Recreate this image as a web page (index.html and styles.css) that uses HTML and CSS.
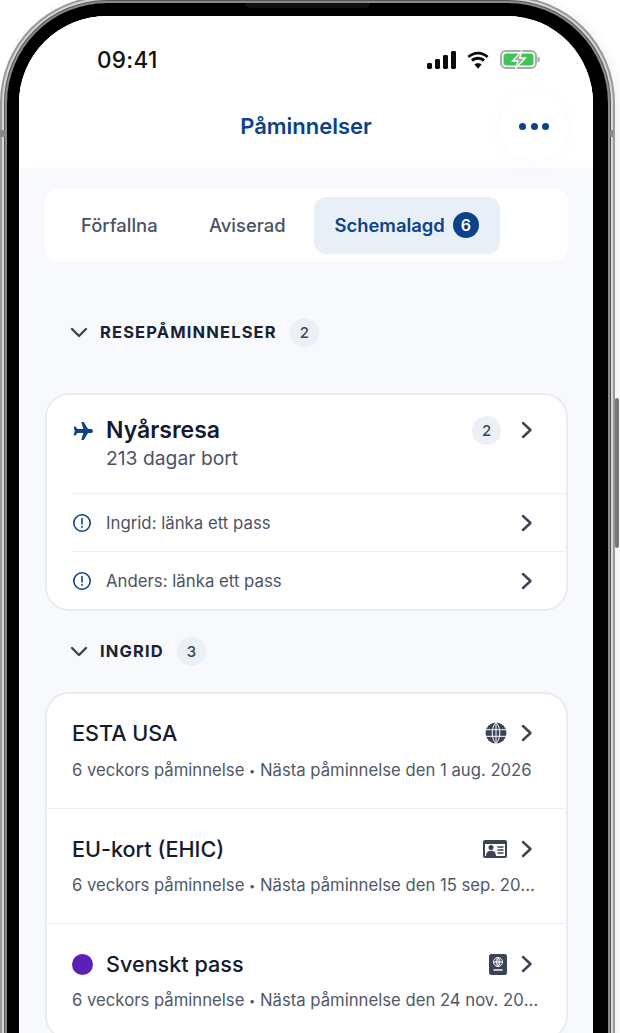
FILE: index.html
```html
<!DOCTYPE html>
<html lang="sv">

<head>
    <meta charset="UTF-8">
    <meta name="viewport" content="width=device-width, initial-scale=1.0">
    <title>Påminnelser</title>
    <link rel="stylesheet" href="styles.css">
</head>

<body>
<div class="phone">
    <span class="speaker"></span>
    <span class="side-button"></span>
    <span class="side-notch-left"></span>
    <span class="side-notch-right"></span>

    <div class="screen">
        <header class="top">
            <div class="status">
                <span class="time">09:41</span>
                <div class="status-icons">
                    <svg width="29" height="18" viewBox="0 0 29 18"><rect x="0" y="12" width="5" height="6" rx="1.4"/><rect x="8" y="8" width="5" height="10" rx="1.4"/><rect x="16" y="4" width="5" height="14" rx="1.4"/><rect x="24" y="0" width="5" height="18" rx="1.4"/></svg>
                    <svg width="24" height="18" viewBox="0 0 25 18"><path d="M12.500 3.400c3.500 0 6.700 1.300 9.100 3.500l1.900-2.100C20.500 2 16.700.3 12.500.3S4.500 2 1.500 4.800l1.900 2.100c2.400-2.200 5.600-3.500 9.100-3.500z"/><path d="M12.500 8.700c2 0 3.900.8 5.300 2l2-2.100c-2-1.800-4.500-2.900-7.300-2.900s-5.300 1.100-7.300 2.900l2 2.100c1.400-1.200 3.300-2 5.300-2z"/><path d="M12.500 18l3.700-4.200c-1-.8-2.300-1.300-3.700-1.300s-2.700.5-3.700 1.300z"/></svg>
                    <svg width="41" height="19" viewBox="0 0 41 19">
                        <rect x="1" y="1" width="35" height="17" rx="5" fill="none" stroke="#a8aca8" stroke-width="2"/>
                        <rect x="3.500" y="3.500" width="30" height="12" rx="3" fill="#3ec455"/>
                        <path d="M37.500 6.500c1.500.4 2.500 1.500 2.500 3s-1 2.600-2.500 3z" fill="#a8aca8"/>
                        <path d="M22 .8 12.500 11h5.500l-2.500 7.500 10-10.500h-5.800z" fill="#a8aca8" stroke="#fff" stroke-width="1.300"/>
                    </svg>
                </div>
            </div>
            <div class="title-bar">
                <h1 class="title">Påminnelser</h1>
                <button class="more-button" type="button"><span></span><span></span><span></span></button>
            </div>
        </header>

        <main class="content">
            <nav class="tabs">
                <a class="tab">Förfallna</a>
                <a class="tab">Aviserad</a>
                <a class="tab active">Schemalagd <span class="tab-count">6</span></a>
            </nav>

            <div class="section-head first">
                <svg class="caret" width="18" height="11" viewBox="0 0 18 11"><path d="M2 2l7 7 7-7"/></svg>
                <h2>RESEPÅMINNELSER</h2>
                <span class="count">2</span>
            </div>

            <section class="card">
                <div class="trip-row">
                    <svg class="plane" width="21" height="18" viewBox="0 0 21 18"><path d="M9.300 0h2.400l4.300 6.900h3c1 0 1.900.9 1.900 2.100s-.9 2.100-1.900 2.100h-3L11.700 18H9.300l2-6.900H5.400l-1.900 2.500H1.600L2.800 9 1.600 4.400h1.900l1.900 2.500h5.900z"/></svg>
                    <div class="trip-text">
                        <div class="trip-name">Nyårsresa</div>
                        <div class="trip-sub">213 dagar bort</div>
                    </div>
                    <span class="count">2</span>
                    <svg class="chevron" width="12" height="18" viewBox="0 0 12 18"><path d="M2 2l7.500 7L2 16"/></svg>
                </div>
                <div class="todo-row">
                    <svg class="alert" width="20" height="20" viewBox="0 0 20 20"><circle cx="10" cy="10" r="8.200"/><path d="M10 5.500v5.500M10 13.600v.6"/></svg>
                    <span class="todo-text">Ingrid: länka ett pass</span>
                    <svg class="chevron" width="12" height="18" viewBox="0 0 12 18"><path d="M2 2l7.500 7L2 16"/></svg>
                </div>
                <div class="todo-row">
                    <svg class="alert" width="20" height="20" viewBox="0 0 20 20"><circle cx="10" cy="10" r="8.200"/><path d="M10 5.500v5.500M10 13.600v.6"/></svg>
                    <span class="todo-text">Anders: länka ett pass</span>
                    <svg class="chevron" width="12" height="18" viewBox="0 0 12 18"><path d="M2 2l7.500 7L2 16"/></svg>
                </div>
            </section>

            <div class="section-head">
                <svg class="caret" width="18" height="11" viewBox="0 0 18 11"><path d="M2 2l7 7 7-7"/></svg>
                <h2>INGRID</h2>
                <span class="count">3</span>
            </div>

            <section class="card">
                <div class="doc-row">
                    <div class="doc-top">
                        <span class="doc-name">ESTA USA</span>
                        <svg class="doc-icon" width="22" height="22" viewBox="0 0 22 22"><circle cx="11" cy="11" r="10.500"/><path d="M.5 7.700h21M.5 14.300h21M11 .5v21M11 .5C6 5 6 17 11 21.500M11 .5c5 4.500 5 16.500 0 21" fill="none" stroke="#fff" stroke-width="1"/></svg>
                        <svg class="chevron" width="12" height="18" viewBox="0 0 12 18"><path d="M2 2l7.500 7L2 16"/></svg>
                    </div>
                    <div class="doc-sub">6 veckors påminnelse <span class="sep">•</span> Nästa påminnelse den 1 aug. 2026</div>
                </div>
                <div class="doc-row">
                    <div class="doc-top">
                        <span class="doc-name">EU-kort (EHIC)</span>
                        <svg class="doc-icon" width="24" height="18" viewBox="0 0 24 18"><rect width="24" height="18" rx="2"/><rect x="2" y="4" width="20" height="12" fill="#fff"/><circle cx="8" cy="7.500" r="2.500"/><path d="M3 16c0-3.500 2.200-5.200 5-5.200s5 1.700 5 5.200z"/><path d="M14.500 7h6M14.500 10h6M14.500 13h6" stroke="#3b4455" stroke-width="1.600"/></svg>
                        <svg class="chevron" width="12" height="18" viewBox="0 0 12 18"><path d="M2 2l7.500 7L2 16"/></svg>
                    </div>
                    <div class="doc-sub">6 veckors påminnelse <span class="sep">•</span> Nästa påminnelse den 15 sep. 2026</div>
                </div>
                <div class="doc-row">
                    <div class="doc-top">
                        <span class="dot"></span>
                        <span class="doc-name">Svenskt pass</span>
                        <svg class="doc-icon" width="18" height="21" viewBox="0 0 18 21"><rect width="18" height="21" rx="2.500"/><g fill="none" stroke="#fff" stroke-width="1"><circle cx="9" cy="8" r="4.500"/><path d="M4.500 8h9M9 3.500v9M9 3.500c-2.500 2.500-2.500 6.500 0 9M9 3.500c2.500 2.500 2.500 6.500 0 9"/></g><path d="M4.500 16h9" stroke="#fff" stroke-width="1.400"/></svg>
                        <svg class="chevron" width="12" height="18" viewBox="0 0 12 18"><path d="M2 2l7.500 7L2 16"/></svg>
                    </div>
                    <div class="doc-sub">6 veckors påminnelse <span class="sep">•</span> Nästa påminnelse den 24 nov. 2026</div>
                </div>
            </section>
        </main>
    </div>
</div>
</body>

</html>
```

FILE: styles.css
```css
html,
body {
    margin: 0;
    height: 1033px;
    overflow: hidden;
    background-color: #fff;
}

body {
    font-family: 'Inter', 'Liberation Sans', sans-serif;
    color: #141b2e;
}

h1,
h2 {
    margin: 0;
}

.phone {
    position: relative;
    box-sizing: border-box;
    width: 601px;
    height: 1200px;
    margin: 3px 0 0 7px;
    border: 12px solid #000;
    border-top-width: 13px;
    border-right-width: 15px;
    border-radius: 100px;
    box-shadow: 0 0 0 2px #8a8a8a, 0 0 0 3px #555, 0 0 0 5px #d8d8d8, 0 0 0 7px #999, 3px 0 12px 7px rgba(0, 0, 0, 0.06);
}

.speaker {
    position: absolute;
    top: -13px;
    left: 226px;
    width: 125px;
    height: 5px;
    background-color: #111;
    border-radius: 0 0 6px 6px;
}

.side-button {
    position: absolute;
    top: 382px;
    right: -26px;
    width: 4px;
    height: 150px;
    background-color: #777;
    border-radius: 2px;
}

.side-notch-left {
    position: absolute;
    top: 114px;
    left: -19px;
    width: 5px;
    height: 7px;
    background-color: #888;
}

.side-notch-right {
    position: absolute;
    top: 114px;
    right: -20px;
    width: 5px;
    height: 7px;
    background-color: #888;
}

.screen {
    height: 100%;
    overflow: hidden;
    background-color: #f7f9fd;
    border-radius: 88px;
}

.top {
    height: 152px;
    background-color: #fff;
}

.status {
    display: flex;
    align-items: center;
    justify-content: space-between;
    padding: 30px 52px 0 78px;
}

.time {
    font-size: 22.500px;
    font-weight: 500;
    color: #111;
    letter-spacing: 0.3px;
}

.status-icons {
    display: flex;
    align-items: center;
    gap: 10px;
}

.status-icons svg {
    fill: #0b0b0b;
}

.title-bar {
    position: relative;
    display: flex;
    justify-content: center;
    margin-top: 40px;
}

.title {
    font-size: 22px;
    font-weight: 600;
    line-height: 26px;
    color: #0b4289;
}

.more-button {
    position: absolute;
    top: -21px;
    right: 25px;
    display: flex;
    align-items: center;
    justify-content: center;
    gap: 4.500px;
    width: 68px;
    height: 68px;
    padding: 0;
    border: none;
    border-radius: 50%;
    background-color: #fff;
    box-shadow: 0 2px 20px rgba(20, 40, 80, 0.03);
}

.more-button span {
    width: 7px;
    height: 7px;
    border-radius: 50%;
    background-color: #0b4289;
}

.content {
    padding: 21px 25px 0 26px;
}

.tabs {
    display: flex;
    align-items: center;
    height: 72px;
    padding: 0 8px;
    box-sizing: border-box;
    background-color: #fff;
    border-radius: 14px;
}

.tab {
    display: flex;
    align-items: center;
    height: 57px;
    padding: 0 28px;
    font-size: 18.400px;
    font-weight: 500;
    color: #495264;
    border-radius: 12px;
}

.tab:first-child {
    width: 77px;
    padding: 0 25px 0 28px;
}

.tab:nth-child(2) {
    padding: 0 29px 0 26px;
}

.tab.active {
    gap: 8px;
    margin-left: -1px;
    padding: 0 21px;
    font-weight: 600;
    color: #0b4289;
    background-color: #e9eff6;
}

.tab-count {
    display: flex;
    align-items: center;
    justify-content: center;
    width: 26px;
    height: 26px;
    font-size: 16px;
    color: #fff;
    background-color: #0b4289;
    border-radius: 50%;
}

.section-head {
    display: flex;
    align-items: center;
    height: 30px;
    padding-left: 25px;
    margin: 25px 0 26px;
}

.section-head.first {
    margin: 56px 0 46px;
}

.section-head h2 {
    margin: 0 13px 0 12px;
    font-size: 16.500px;
    font-weight: 700;
    letter-spacing: 1.150px;
    color: #1a2133;
}

.caret path,
.chevron path {
    fill: none;
    stroke: #3b4455;
    stroke-width: 2.400;
    stroke-linecap: round;
    stroke-linejoin: round;
}

.count {
    display: flex;
    align-items: center;
    justify-content: center;
    width: 29px;
    height: 29px;
    flex-shrink: 0;
    font-size: 15px;
    font-weight: 500;
    color: #3b4455;
    background-color: #ebf0f6;
    border-radius: 50%;
}

.card {
    background-color: #fff;
    border: 2px solid #e9ecf1;
    border-radius: 24px;
}

.trip-row {
    display: flex;
    align-items: flex-start;
    height: 98px;
    padding: 20px 33px 0 25px;
    box-sizing: border-box;
}

.plane {
    margin: 7px 13px 0 0;
    fill: #0b4289;
}

.trip-text {
    flex: 1;
}

.trip-name {
    font-size: 23px;
    font-weight: 600;
    line-height: 30px;
}

.trip-sub {
    font-size: 19.300px;
    line-height: 26px;
    color: #4a5365;
}

.trip-row .count {
    margin: 1px 20px 0 0;
}

.trip-row .chevron {
    margin-top: 6px;
}

.todo-row {
    display: flex;
    align-items: center;
    height: 58px;
    margin-left: 25px;
    padding-right: 33px;
    box-sizing: border-box;
    border-top: 1px solid #eef0f4;
}

.alert {
    margin-right: 14px;
}

.alert circle,
.alert path {
    fill: none;
    stroke: #0b4289;
    stroke-width: 1.600;
    stroke-linecap: round;
}

.todo-text {
    flex: 1;
    font-size: 16.800px;
    color: #4a5365;
}

.doc-row {
    height: 115px;
    padding: 25px 33px 0 25px;
    box-sizing: border-box;
    border-top: 1px solid #eef0f4;
}

.doc-row:first-child {
    padding-top: 24px;
    border-top: none;
    height: 114px;
}

.doc-top {
    display: flex;
    align-items: center;
    height: 30px;
}

.doc-name {
    flex: 1;
    font-size: 21.600px;
    font-weight: 500;
}

.doc-icon {
    margin-right: 14px;
    fill: #3b4455;
}

.dot {
    width: 21px;
    height: 21px;
    margin-right: 13px;
    background-color: #5b21b6;
    border-radius: 50%;
}

.doc-sub {
    margin-top: 11px;
    margin-right: -6px;
    font-size: 16.700px;
    line-height: 20px;
    color: #4f5868;
    white-space: nowrap;
    overflow: hidden;
    text-overflow: ellipsis;
}

.doc-row:first-child .doc-sub {
    margin-top: 12px;
}

.sep {
    font-size: 11px;
    vertical-align: 1px;
}
```
